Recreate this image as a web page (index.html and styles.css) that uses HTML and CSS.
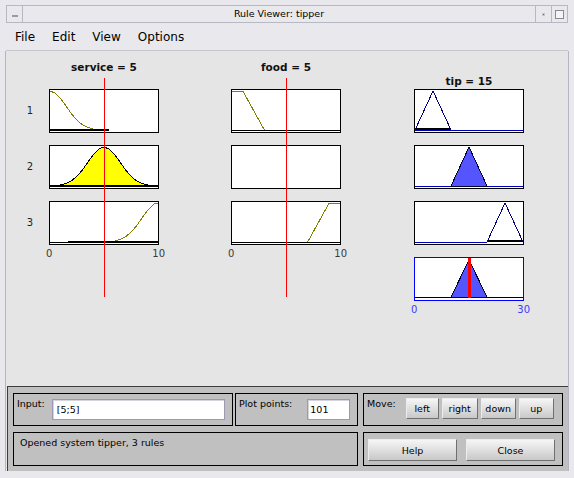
FILE: index.html
```html
<!DOCTYPE html>
<html lang="en">
  <head>
    <meta charset="UTF-8" />
    <title>Rule Viewer: tipper</title>
    <link rel="stylesheet" href="styles.css">
  </head>
  <body>
    <div class="titlebar">
      <div class="tb-btn tb-left"><span class="tb-dash"></span></div>
      <div class="tb-title">Rule Viewer: tipper</div>
      <div class="tb-btn tb-min"><span class="tb-dot"></span></div>
      <div class="tb-btn tb-max"><span class="tb-box"></span></div>
    </div>

    <div class="menubar">
      <span>File</span>
      <span>Edit</span>
      <span>View</span>
      <span>Options</span>
    </div>

    <div class="figure">
      <div class="plots">
        <div class="rule-labels">
          <div>1</div>
          <div>2</div>
          <div>3</div>
        </div>

        <!-- service -->
        <div class="col col-service">
          <div class="col-head">service = 5</div>
          <div class="stack">
            <div class="plot">
              <svg viewBox="0 0 108 42">
                <rect class="bar" x="0" y="39" width="59" height="2" />
                <polyline class="mf-off" points="0,1 5.4,3.1 10.8,8.8 16.2,16.3 21.6,24 27,30.3 32.4,34.7 37.8,37.4 43.2,38.9" />
              </svg>
            </div>
            <div class="plot">
              <svg viewBox="0 0 108 42">
                <polygon class="mf-in" points="0,40 0,39.8 5.4,39.6 10.8,38.9 16.2,37.4 21.6,34.7 27,30.3 32.4,24 37.8,16.3 43.2,8.8 48.6,3.1 54,1 59.4,3.1 64.8,8.8 70.2,16.3 75.6,24 81,30.3 86.4,34.7 91.8,37.4 97.2,38.9 102.6,39.6 108,39.8 108,40" />
                <rect class="bar" x="0" y="39" width="108" height="2" />
              </svg>
            </div>
            <div class="plot">
              <svg viewBox="0 0 108 42">
                <line class="base" x1="0" y1="40.5" x2="18" y2="40.5" />
                <rect class="bar" x="18" y="39" width="90" height="2" />
                <polyline class="mf-off" points="64.8,38.9 70.2,37.4 75.6,34.7 81,30.3 86.4,24 91.8,16.3 97.2,8.8 102.6,3.1 106,1 108,1" />
              </svg>
            </div>
          </div>
          <div class="axis"><span>0</span><span>10</span></div>
          <div class="cursor"></div>
        </div>

        <!-- food -->
        <div class="col col-food">
          <div class="col-head">food = 5</div>
          <div class="stack">
            <div class="plot">
              <svg viewBox="0 0 108 42">
                <line class="base" x1="0" y1="40.5" x2="108" y2="40.5" />
                <polyline class="mf-off" points="0,1 10.8,1 32.4,40" />
              </svg>
            </div>
            <div class="plot">
              <svg viewBox="0 0 108 42"></svg>
            </div>
            <div class="plot">
              <svg viewBox="0 0 108 42">
                <line class="base" x1="0" y1="40.5" x2="108" y2="40.5" />
                <polyline class="mf-off" points="75.6,40 97.2,1 108,1" />
              </svg>
            </div>
          </div>
          <div class="axis"><span>0</span><span>10</span></div>
          <div class="cursor"></div>
        </div>

        <!-- tip -->
        <div class="col col-tip">
          <div class="col-head">tip = 15</div>
          <div class="stack">
            <div class="plot">
              <svg viewBox="0 0 108 42">
                <line class="base-out" x1="0" y1="40.5" x2="108" y2="40.5" />
                <rect class="bar" x="0" y="38" width="36" height="2" />
                <polyline class="mf-out" points="0,40 18,1 36,40" />
              </svg>
            </div>
            <div class="plot">
              <svg viewBox="0 0 108 42">
                <line class="base-out" x1="0" y1="40.5" x2="108" y2="40.5" />
                <polygon class="mf-fill" points="36,40 54,1 72,40" />
              </svg>
            </div>
            <div class="plot">
              <svg viewBox="0 0 108 42">
                <line class="base-out" x1="0" y1="40.5" x2="72" y2="40.5" />
                <rect class="bar" x="72" y="38" width="36" height="2" />
                <polyline class="mf-out" points="72,40 90,1 108,40" />
              </svg>
            </div>
            <div class="plot agg">
              <svg viewBox="0 0 108 42">
                <polygon class="mf-fill" points="36,39 54,2 72,39" />
                <line class="base" x1="0" y1="39.5" x2="108" y2="39.5" />
                <rect class="out-line" x="53" y="0" width="3" height="40" />
              </svg>
            </div>
          </div>
          <div class="axis"><span>0</span><span>30</span></div>
        </div>
      </div>

      <div class="panel">
        <div class="row">
          <div class="frame f-input">
            <span class="lbl">Input:</span>
            <div class="field field-input">[5;5]</div>
          </div>
          <div class="frame f-points">
            <span class="lbl">Plot points:</span>
            <div class="field field-points">101</div>
          </div>
          <div class="frame f-move">
            <span class="lbl">Move:</span>
            <div class="move-btns">
              <button class="btn btn-left">left</button>
              <button class="btn btn-right">right</button>
              <button class="btn btn-down">down</button>
              <button class="btn btn-up">up</button>
            </div>
          </div>
        </div>
        <div class="row">
          <div class="frame f-status">Opened system tipper, 3 rules</div>
          <div class="frame f-buttons">
            <button class="btn btn-wide">Help</button>
            <button class="btn btn-wide">Close</button>
          </div>
        </div>
      </div>
    </div>
  </body>
</html>
```

FILE: styles.css
```css
* {
    box-sizing: border-box;
}

body {
    margin: 0;
    width: 574px;
    height: 478px;
    overflow: hidden;
    background: #e9e9ed;
    font-family: "DejaVu Sans", sans-serif;
    color: #000;
}

/* window chrome */

.titlebar {
    display: flex;
    height: 18px;
    margin: 5px 6px 0;
    border: 1px solid #b8b8c2;
    font-size: 9.5px;
}

.tb-btn {
    width: 16px;
    display: flex;
    align-items: center;
    justify-content: center;
}

.tb-left {
    border-right: 1px solid #b8b8c2;
}

.tb-min,
.tb-max {
    border-left: 1px solid #b8b8c2;
}

.tb-dash {
    width: 6px;
    height: 2px;
    background: #9a9aa2;
    margin-top: 3px;
}

.tb-dot {
    width: 3px;
    height: 3px;
    background: #6a6a70;
    border: 1px solid #c8c8cc;
}

.tb-box {
    width: 9px;
    height: 9px;
    border: 1px solid #8a8a92;
    background: #f4f4f6;
}

.tb-title {
    flex: 1;
    text-align: center;
    line-height: 16px;
}

.menubar {
    display: flex;
    align-items: center;
    gap: 17px;
    height: 28px;
    margin: 0 6px;
    padding-left: 9px;
    font-size: 12px;
    border-bottom: 1px solid #c8c8cc;
}

/* figure */

.figure {
    height: 420px;
    margin: 0 5px;
    border-left: 1px solid #b4b4c4;
    border-right: 1px solid #b4b4c4;
    background: #e5e5e5;
}

.plots {
    display: flex;
    height: 335px;
}

.rule-labels {
    width: 43px;
    padding: 38px 0 0 5px;
    display: flex;
    flex-direction: column;
    gap: 12px;
    font-size: 10px;
    color: #222;
}

.rule-labels div {
    height: 44px;
    line-height: 44px;
    text-align: center;
}

.col {
    position: relative;
    width: 110px;
}

.col-food {
    margin-left: 72px;
}

.col-tip {
    margin-left: 73px;
}

.col-head {
    height: 38px;
    padding-top: 9px;
    font-size: 10.5px;
    font-weight: bold;
    line-height: 14px;
    text-align: center;
    white-space: nowrap;
    color: #111;
}

.col-tip .col-head {
    padding-top: 23px;
}

.stack {
    display: flex;
    flex-direction: column;
    gap: 12px;
}

.plot {
    width: 110px;
    height: 44px;
    border: 1px solid #000;
    background: #fff;
}

.plot.agg {
    border-color: #0000ff;
}

.plot svg {
    display: block;
    width: 108px;
    height: 42px;
}

.mf-off {
    fill: none;
    stroke: #808000;
    stroke-width: 1;
    shape-rendering: crispEdges;
}

.mf-in {
    fill: #ffff00;
    stroke: #000;
    stroke-width: 1;
    shape-rendering: crispEdges;
}

.mf-out {
    fill: none;
    stroke: #000080;
    stroke-width: 1;
    shape-rendering: crispEdges;
}

.mf-fill {
    fill: #5555ff;
    stroke: #000030;
    stroke-width: 1;
    shape-rendering: crispEdges;
}

.bar {
    fill: #000;
}

.base {
    stroke: #000;
    stroke-width: 1;
}

.base-out {
    stroke: #0000b4;
    stroke-width: 1;
}

.out-line {
    fill: #ff0000;
}

.axis {
    display: flex;
    justify-content: space-between;
    margin: 3px -6px 0 -3px;
    font-size: 10px;
    line-height: 12px;
    color: #3a3a3a;
}

.col-tip .axis {
    color: #3c3cff;
}

.cursor {
    position: absolute;
    left: 55px;
    top: 27px;
    width: 1px;
    height: 219px;
    background: #ff0000;
}

/* bottom panel */

.panel {
    height: 85px;
    margin-left: 1px;
    padding: 6px 0 0 5px;
    border-top: 1px solid #3c3c3c;
    border-left: 1px solid #3c3c3c;
    background: #c0c0c0;
    display: flex;
    flex-direction: column;
    gap: 6px;
    font-size: 9.5px;
}

.row {
    display: flex;
}

.frame {
    height: 33px;
    border: 1px solid #000;
    background: #c0c0c0;
    display: flex;
    align-items: flex-start;
}

.row + .row .frame {
    height: 34px;
}

.lbl {
    line-height: 12px;
    margin-top: 4px;
    white-space: nowrap;
}

.f-input {
    width: 220px;
    padding-left: 3px;
}

.f-points {
    width: 123px;
    margin-left: 2px;
    padding-left: 3px;
}

.f-move {
    width: 200px;
    margin-left: 5px;
    padding-left: 3px;
}

.field {
    height: 21px;
    margin-top: 5px;
    padding-left: 4px;
    line-height: 19px;
    background: #fff;
    border: 1px solid #9a9ab2;
    box-shadow: inset 1px 1px 0 #d4d4de;
}

.field-input {
    width: 173px;
    margin-left: 7px;
}

.field-points {
    width: 43px;
    margin-left: 15px;
    padding-left: 2px;
}

.move-btns {
    display: flex;
    gap: 3px;
    margin: 4px 0 0 10px;
}

.btn {
    height: 21px;
    padding: 0;
    font-family: "DejaVu Sans", sans-serif;
    font-size: 9.5px;
    color: #000;
    background: linear-gradient(#f6f6f6, #c8c8c8);
    border: 1px solid;
    border-color: #ececec #707070 #707070 #ececec;
}

.btn-left {
    width: 33px;
}

.btn-right {
    width: 36px;
}

.btn-down,
.btn-up {
    width: 35px;
}

.f-status {
    width: 345px;
    padding: 4px 0 0 6px;
    line-height: 12px;
}

.f-buttons {
    width: 200px;
    margin-left: 5px;
    padding: 6px 0 0 4px;
    gap: 9px;
}

.btn-wide {
    width: 89px;
    height: 22px;
}
```
